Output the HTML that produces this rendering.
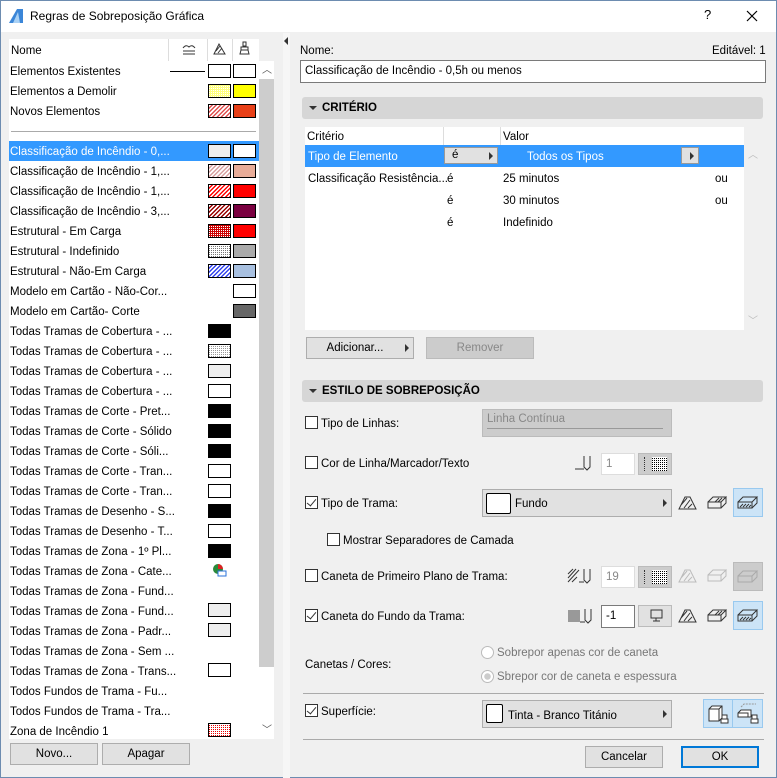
<!DOCTYPE html>
<html><head><meta charset="utf-8"><style>
*{box-sizing:border-box;margin:0;padding:0}
body{width:777px;height:778px;background:#f0f0f0;font-family:"Liberation Sans",sans-serif;font-size:11.5px;color:#000;position:relative;overflow:hidden}
.a{position:absolute}
.win{left:0;top:0;width:777px;height:778px;border:1px solid #6d8cb0}
.t{position:absolute;white-space:nowrap;line-height:14px}
.sw{position:absolute;width:23px;height:14px;border:1px solid #000}
.btn{position:absolute;background:#e1e1e1;border:1px solid #adadad;text-align:center;line-height:20px}
.hdr{position:absolute;background:#d6d6d6;border-radius:3px;font-weight:bold;line-height:22px;padding-left:20px}
.hdr:before{content:"";position:absolute;left:7px;top:9px;border-left:4px solid transparent;border-right:4px solid transparent;border-top:4px solid #333}
.cb{position:absolute;width:13px;height:13px;border:1px solid #333;background:#fff}
.ck:after{content:"";position:absolute;left:3px;top:0px;width:4px;height:8px;border-right:1.5px solid #333;border-bottom:1.5px solid #333;transform:rotate(40deg)}
.dd{position:absolute;background:#e1e1e1;border:1px solid #adadad}
.dd:after{content:"";position:absolute;right:4px;top:50%;margin-top:-4px;border-top:4px solid transparent;border-bottom:4px solid transparent;border-left:4px solid #333}
.inp{position:absolute;background:#fff;border:1px solid #ccc;line-height:20px;padding-left:4px}
.ib{position:absolute;width:30px;height:29px}
.sel{background:#cce4f7;border:1px solid #99c9ef}
.hatch{background:repeating-linear-gradient(135deg,#fff 0 1.5px,var(--c) 1.5px 3px)}
.dots{background-color:#fff;background-image:linear-gradient(90deg,var(--c) 50%,transparent 50%),linear-gradient(0deg,#fff 50%,transparent 50%);background-size:2px 2px;background-blend-mode:normal}
.dots2{background-image:repeating-linear-gradient(90deg,var(--c) 0 1px,transparent 1px 2px);position:absolute;inset:0}
.mask{position:absolute;inset:0;background-image:repeating-linear-gradient(0deg,transparent 0 1px,var(--b,#fff) 1px 2px)}
</style></head><body>
<div class="a win"></div>
<div class="a" style="left:1px;top:1px;width:775px;height:31px;background:#fff"></div>
<svg class="a" style="left:8px;top:8px" width="16" height="16"><path d="M1 15 L9 1 L15 1 L15 15 Z" fill="#3b86d8"/><path d="M5 15 L10 4 L12 15Z" fill="#a9d1f5"/></svg>
<div class="t" style="left:30px;top:9px;font-size:12px">Regras de Sobreposição Gráfica</div>
<div class="t" style="left:704px;top:8px;font-size:13px">?</div>
<svg class="a" style="left:746px;top:10px" width="12" height="12"><path d="M1 1L11 11M11 1L1 11" stroke="#000" stroke-width="1.2"/></svg>

<div class="a" style="left:9px;top:39px;width:250px;height:700px;background:#fff"></div>
<div class="a" style="left:259px;top:61px;width:15px;height:678px;background:#fff"></div>
<div class="a" style="left:259px;top:79px;width:15px;height:588px;background:#cdcdcd"></div>
<div class="t" style="left:262px;top:64px;font-size:10px;color:#555">︿</div>
<div class="t" style="left:262px;top:724px;font-size:10px;color:#555">﹀</div>
<div class="a" style="left:283px;top:33px;width:7px;height:745px;background:#f6f6f6"></div>
<div class="a" style="left:284px;top:37px;border-top:4px solid transparent;border-bottom:4px solid transparent;border-right:4px solid #333"></div>
<div class="a" style="left:168px;top:39px;width:1px;height:22px;background:#ddd"></div>
<div class="a" style="left:207px;top:39px;width:1px;height:22px;background:#ddd"></div>
<div class="a" style="left:232px;top:39px;width:1px;height:22px;background:#ddd"></div>
<div class="t" style="left:11px;top:44px">Nome</div>
<svg class="a" style="left:182px;top:43px" width="14" height="12"><path d="M1 5Q4 1 7 4Q10 1 13 5M1 8H13M1 11H13" stroke="#333" fill="none"/></svg>
<svg class="a" style="left:213px;top:42px" width="13" height="13"><path d="M1 12L6 2L12 12ZM3 9L7 4M5 11L9 6" stroke="#333" fill="none"/></svg>
<svg class="a" style="left:239px;top:41px" width="11" height="14"><path d="M4 1H7V5H4ZM2 6H9V9H2ZM2 9L1 13H10L9 9" stroke="#333" fill="none"/></svg>

<div class="t" style="left:10px;top:65px">Elementos Existentes</div>
<div class="a" style="left:170px;top:71px;width:35px;height:1px;background:#000"></div>
<div class="sw" style="left:208px;top:64px"></div><div class="sw" style="left:233px;top:64px"></div>
<div class="t" style="left:10px;top:85px">Elementos a Demolir</div>
<div class="sw" style="left:208px;top:84px;background:#ffff80"><div class="dots2" style="--c:#fff"></div><div class="mask" style="--b:#ffff80"></div></div><div class="sw" style="left:233px;top:84px;background:#ff0"></div>
<div class="t" style="left:10px;top:105px">Novos Elementos</div>
<div class="sw hatch" style="left:208px;top:104px;--c:#e05050"></div><div class="sw" style="left:233px;top:104px;background:#e84018"></div>
<div class="a" style="left:11px;top:131px;width:245px;height:1px;background:#aaa"></div>

<div class="a" style="left:9px;top:141px;width:250px;height:20px;background:#3399ff"></div>
<div class="t" style="left:10px;top:145px;color:#fff">Classificação de Incêndio - 0,...</div>
<div class="sw" style="left:208px;top:144px;background:#eee"></div><div class="sw" style="left:233px;top:144px;background:#fff"></div>

<div class="t" style="left:10px;top:165px">Classificação de Incêndio - 1,...</div>
<div class="sw hatch" style="left:208px;top:164px;--c:#d8a0a0"></div><div class="sw" style="left:233px;top:164px;background:#e8ac98"></div>
<div class="t" style="left:10px;top:185px">Classificação de Incêndio - 1,...</div>
<div class="sw hatch" style="left:208px;top:184px;--c:#f00"></div><div class="sw" style="left:233px;top:184px;background:#f00"></div>
<div class="t" style="left:10px;top:205px">Classificação de Incêndio - 3,...</div>
<div class="sw hatch" style="left:208px;top:204px;--c:#900"></div><div class="sw" style="left:233px;top:204px;background:#7a0040"></div>
<div class="t" style="left:10px;top:225px">Estrutural - Em Carga</div>
<div class="sw" style="left:208px;top:224px;background:#c00"><div class="dots2" style="--c:#fff"></div><div class="mask" style="--b:#c00"></div></div><div class="sw" style="left:233px;top:224px;background:#f00"></div>
<div class="t" style="left:10px;top:245px">Estrutural - Indefinido</div>
<div class="sw" style="left:208px;top:244px;background:#fff"><div class="dots2" style="--c:#777"></div><div class="mask"></div></div><div class="sw" style="left:233px;top:244px;background:#aaa"></div>
<div class="t" style="left:10px;top:265px">Estrutural - Não-Em Carga</div>
<div class="sw hatch" style="left:208px;top:264px;--c:#3344ee"></div><div class="sw" style="left:233px;top:264px;background:#a8c0e0"></div>
<div class="t" style="left:10px;top:285px">Modelo em Cartão - Não-Cor...</div>
<div class="sw" style="left:233px;top:284px;background:#fff"></div>
<div class="t" style="left:10px;top:305px">Modelo em Cartão- Corte</div>
<div class="sw" style="left:233px;top:304px;background:#666"></div>

<div class="t" style="left:10px;top:325px">Todas Tramas de Cobertura - ...</div><div class="sw" style="left:208px;top:324px;background:#000"></div>
<div class="t" style="left:10px;top:345px">Todas Tramas de Cobertura - ...</div><div class="sw" style="left:208px;top:344px;background:#fff"><div class="dots2" style="--c:#999"></div><div class="mask"></div></div>
<div class="t" style="left:10px;top:365px">Todas Tramas de Cobertura - ...</div><div class="sw" style="left:208px;top:364px;background:#eee"></div>
<div class="t" style="left:10px;top:385px">Todas Tramas de Cobertura - ...</div><div class="sw" style="left:208px;top:384px;background:#fff"></div>
<div class="t" style="left:10px;top:405px">Todas Tramas de Corte - Pret...</div><div class="sw" style="left:208px;top:404px;background:#000"></div>
<div class="t" style="left:10px;top:425px">Todas Tramas de Corte - Sólido</div><div class="sw" style="left:208px;top:424px;background:#000"></div>
<div class="t" style="left:10px;top:445px">Todas Tramas de Corte - Sóli...</div><div class="sw" style="left:208px;top:444px;background:#000"></div>
<div class="t" style="left:10px;top:465px">Todas Tramas de Corte - Tran...</div><div class="sw" style="left:208px;top:464px;background:#fff"></div>
<div class="t" style="left:10px;top:485px">Todas Tramas de Corte - Tran...</div><div class="sw" style="left:208px;top:484px;background:#fff"></div>
<div class="t" style="left:10px;top:505px">Todas Tramas de Desenho - S...</div><div class="sw" style="left:208px;top:504px;background:#000"></div>
<div class="t" style="left:10px;top:525px">Todas Tramas de Desenho - T...</div><div class="sw" style="left:208px;top:524px;background:#fff"></div>
<div class="t" style="left:10px;top:545px">Todas Tramas de Zona - 1º Pl...</div><div class="sw" style="left:208px;top:544px;background:#000"></div>
<div class="t" style="left:10px;top:565px">Todas Tramas de Zona - Cate...</div>
<svg class="a" style="left:212px;top:563px" width="16" height="14"><circle cx="6" cy="6" r="5" fill="#2a8a3a"/><path d="M6 6V1A5 5 0 0 1 11 6Z" fill="#d22"/><path d="M6 8H14V13H6Z" fill="#fff" stroke="#2a72d8"/></svg>
<div class="t" style="left:10px;top:585px">Todas Tramas de Zona - Fund...</div>
<div class="t" style="left:10px;top:605px">Todas Tramas de Zona - Fund...</div><div class="sw" style="left:208px;top:603px;background:#eee"></div>
<div class="t" style="left:10px;top:625px">Todas Tramas de Zona - Padr...</div><div class="sw" style="left:208px;top:623px;background:#eee"></div>
<div class="t" style="left:10px;top:645px">Todas Tramas de Zona - Sem ...</div>
<div class="t" style="left:10px;top:665px">Todas Tramas de Zona - Trans...</div><div class="sw" style="left:208px;top:663px;background:#fff"></div>
<div class="t" style="left:10px;top:685px">Todos Fundos de Trama - Fu...</div>
<div class="t" style="left:10px;top:705px">Todos Fundos de Trama - Tra...</div>
<div class="t" style="left:10px;top:725px">Zona de Incêndio 1</div><div class="sw" style="left:208px;top:723px;background:#fff"><div class="dots2" style="--c:#e00"></div><div class="mask"></div></div>

<div class="btn" style="left:10px;top:743px;width:88px;height:22px">Novo...</div>
<div class="btn" style="left:102px;top:743px;width:88px;height:22px">Apagar</div>

<div class="t" style="left:300px;top:44px">Nome:</div>
<div class="t" style="left:712px;top:44px">Editável: 1</div>
<div class="inp" style="left:300px;top:60px;width:466px;height:23px;border-color:#7a7a7a;line-height:21px">Classificação de Incêndio - 0,5h ou menos</div>
<div class="hdr" style="left:302px;top:97px;width:461px;height:22px">CRITÉRIO</div>
<div class="a" style="left:305px;top:127px;width:439px;height:203px;background:#fff"></div>
<div class="a" style="left:443px;top:127px;width:1px;height:18px;background:#ddd"></div>
<div class="a" style="left:500px;top:127px;width:1px;height:18px;background:#ddd"></div>
<div class="t" style="left:307px;top:130px">Critério</div>
<div class="t" style="left:503px;top:130px">Valor</div>
<div class="a" style="left:305px;top:145px;width:439px;height:22px;background:#3399ff"></div>
<div class="t" style="left:308px;top:150px;color:#fff">Tipo de Elemento</div>
<div class="dd" style="left:444px;top:147px;width:54px;height:17px;border-color:#999;padding-left:7px;line-height:15px">é</div>
<div class="t" style="left:527px;top:150px;color:#fff">Todos os Tipos</div>
<div class="dd" style="left:681px;top:147px;width:18px;height:17px;border-color:#999"></div>
<div class="t" style="left:308px;top:172px">Classificação Resistência...</div>
<div class="t" style="left:447px;top:172px">é</div><div class="t" style="left:503px;top:172px">25 minutos</div><div class="t" style="left:715px;top:172px">ou</div>
<div class="t" style="left:447px;top:194px">é</div><div class="t" style="left:503px;top:194px">30 minutos</div><div class="t" style="left:715px;top:194px">ou</div>
<div class="t" style="left:447px;top:216px">é</div><div class="t" style="left:503px;top:216px">Indefinido</div>
<div class="t" style="left:748px;top:149px;font-size:10px;color:#bbb">︿</div>
<div class="t" style="left:748px;top:315px;font-size:10px;color:#bbb">﹀</div>
<div class="dd" style="left:306px;top:337px;width:108px;height:22px;text-align:center;line-height:20px;padding-right:10px">Adicionar...</div>
<div class="btn" style="left:426px;top:337px;width:108px;height:22px;background:#ccc;border-color:#bbb;color:#888">Remover</div>

<div class="hdr" style="left:302px;top:380px;width:461px;height:22px">ESTILO DE SOBREPOSIÇÃO</div>
<div class="cb" style="left:305px;top:416px"></div><div class="t" style="left:321px;top:417px">Tipo de Linhas:</div>
<div class="a" style="left:482px;top:409px;width:190px;height:28px;background:#ccc;border:1px solid #bbb"></div>
<div class="t" style="left:487px;top:412px;color:#888">Linha Contínua</div>
<div class="a" style="left:487px;top:428px;width:176px;height:1px;background:#999"></div>
<div class="cb" style="left:305px;top:456px"></div><div class="t" style="left:321px;top:457px">Cor de Linha/Marcador/Texto</div>
<svg class="a" style="left:575px;top:453px" width="22" height="18"><path d="M0 16H9M9 3V14L12 17L15 14V3" stroke="#333" fill="none"/></svg>
<div class="inp" style="left:601px;top:453px;width:34px;height:22px;color:#888;border-color:#ddd">1</div>
<div class="a" style="left:638px;top:453px;width:34px;height:22px;background:#ccc;border:1px solid #bbb"></div>
<div class="a" style="left:652px;top:457px;width:15px;height:14px;background:#fff"><div class="dots2" style="--c:#000"></div><div class="mask"></div></div>
<div class="a" style="left:644px;top:457px;width:1px;height:14px;border-left:1px dotted #333"></div>

<div class="cb ck" style="left:305px;top:496px"></div><div class="t" style="left:321px;top:497px">Tipo de Trama:</div>
<div class="dd" style="left:482px;top:489px;width:190px;height:28px"></div>
<div class="a" style="left:486px;top:493px;width:25px;height:21px;background:#fff;border:1px solid #000;border-radius:2px"></div>
<div class="t" style="left:515px;top:497px">Fundo</div>
<svg class="a" style="left:678px;top:495px" width="20" height="16"><path d="M1 14L7 2H12L18 14ZM3 10L9 3M6 13L12 5M10 13L14 9" stroke="#333" fill="none"/></svg>
<svg class="a" style="left:707px;top:495px" width="20" height="16"><path d="M1 7H14V13H1ZM1 7L6 2H19L14 7M19 2V8L14 13M8 7L12 3M11 7L15 3" stroke="#333" fill="none"/></svg>
<div class="ib sel" style="left:733px;top:488px"></div>
<svg class="a" style="left:737px;top:495px" width="22" height="16"><path d="M1 7H15V13H1ZM1 7L6 2H20L15 7M20 2V8L15 13M3 12L6 9M6 12L9 9M9 12L12 9M12 12L14 10" stroke="#333" fill="none"/></svg>

<div class="cb" style="left:327px;top:533px"></div><div class="t" style="left:343px;top:534px">Mostrar Separadores de Camada</div>

<div class="cb" style="left:305px;top:569px"></div><div class="t" style="left:321px;top:570px">Caneta de Primeiro Plano de Trama:</div>
<svg class="a" style="left:567px;top:566px" width="30" height="18"><path d="M1 8L6 3M1 12L9 3M1 16L12 4M5 16L10 11M12 16H17M17 3V14L20 17L23 14V3" stroke="#333" fill="none"/></svg>
<div class="inp" style="left:601px;top:566px;width:34px;height:22px;color:#888;border-color:#ddd">19</div>
<div class="a" style="left:638px;top:566px;width:34px;height:22px;background:#ccc;border:1px solid #bbb"></div>
<div class="a" style="left:652px;top:570px;width:15px;height:14px;background:#fff"><div class="dots2" style="--c:#000"></div><div class="mask"></div></div>
<div class="a" style="left:644px;top:570px;width:1px;height:14px;border-left:1px dotted #333"></div>
<svg class="a" style="left:678px;top:568px" width="20" height="16"><path d="M1 14L7 2H12L18 14ZM3 10L9 3M6 13L12 5M10 13L14 9" stroke="#bbb" fill="none"/></svg>
<svg class="a" style="left:707px;top:568px" width="20" height="16"><path d="M1 7H14V13H1ZM1 7L6 2H19L14 7M19 2V8L14 13" stroke="#bbb" fill="none"/></svg>
<div class="ib" style="left:733px;top:562px;background:#ccc;border:1px solid #bbb"></div>
<svg class="a" style="left:737px;top:569px" width="22" height="16"><path d="M1 7H15V13H1ZM1 7L6 2H20L15 7M20 2V8L15 13" stroke="#aaa" fill="none"/></svg>

<div class="cb ck" style="left:305px;top:609px"></div><div class="t" style="left:321px;top:610px">Caneta do Fundo da Trama:</div>
<div class="a" style="left:568px;top:610px;width:12px;height:12px;background:#999"></div>
<svg class="a" style="left:580px;top:606px" width="18" height="18"><path d="M0 16H5M5 3V14L8 17L11 14V3" stroke="#333" fill="none"/></svg>
<div class="inp" style="left:601px;top:605px;width:34px;height:23px;border-color:#7a7a7a">-1</div>
<div class="a" style="left:638px;top:605px;width:34px;height:22px;background:#e1e1e1;border:1px solid #bbb"></div>
<svg class="a" style="left:650px;top:609px" width="14" height="14"><path d="M1 1H12V9H1ZM6 9V12M3 12H10" stroke="#333" fill="none"/></svg>
<svg class="a" style="left:678px;top:608px" width="20" height="16"><path d="M1 14L7 2H12L18 14ZM3 10L9 3M6 13L12 5M10 13L14 9" stroke="#333" fill="none"/></svg>
<svg class="a" style="left:707px;top:608px" width="20" height="16"><path d="M1 7H14V13H1ZM1 7L6 2H19L14 7M19 2V8L14 13M8 7L12 3M11 7L15 3" stroke="#333" fill="none"/></svg>
<div class="ib sel" style="left:733px;top:601px"></div>
<svg class="a" style="left:737px;top:608px" width="22" height="16"><path d="M1 7H15V13H1ZM1 7L6 2H20L15 7M20 2V8L15 13M3 12L6 9M6 12L9 9M9 12L12 9M12 12L14 10" stroke="#333" fill="none"/></svg>

<div class="t" style="left:305px;top:658px">Canetas / Cores:</div>
<div class="a" style="left:481px;top:646px;width:13px;height:13px;border-radius:50%;border:1px solid #bbb;background:#fff"></div>
<div class="t" style="left:497px;top:646px;color:#777">Sobrepor apenas cor de caneta</div>
<div class="a" style="left:481px;top:670px;width:13px;height:13px;border-radius:50%;border:1px solid #bbb;background:radial-gradient(#ccc 3px,#fff 3.5px)"></div>
<div class="t" style="left:497px;top:670px;color:#777">Sbrepor cor de caneta e espessura</div>
<div class="a" style="left:303px;top:693px;width:461px;height:1px;background:#aaa"></div>
<div class="cb ck" style="left:305px;top:704px"></div><div class="t" style="left:321px;top:705px">Superfície:</div>
<div class="dd" style="left:482px;top:700px;width:190px;height:28px"></div>
<div class="a" style="left:486px;top:704px;width:17px;height:19px;background:#fff;border:1px solid #000;border-radius:2px"></div>
<div class="t" style="left:508px;top:709px">Tinta - Branco Titánio</div>
<div class="a sel" style="left:703px;top:699px;width:60px;height:29px"></div>
<div class="a" style="left:732px;top:700px;width:1px;height:27px;background:#99c9ef"></div>
<svg class="a" style="left:707px;top:703px" width="22" height="22"><path d="M2 6L5 3H15V15L12 18H2ZM2 6H12V18M12 6L15 3" stroke="#333" fill="#fff"/><path d="M15 12H20V16H15ZM14 16H21V20H14Z" stroke="#333" fill="#fff"/></svg>
<svg class="a" style="left:736px;top:703px" width="24" height="22"><path d="M5 4L8 1H20" stroke="#999" stroke-dasharray="2 1" fill="none"/><path d="M2 10L5 7H15V14H2ZM2 10H12V14" stroke="#333" fill="#fff"/><path d="M16 12H21V16H16ZM15 16H22V20H15Z" stroke="#333" fill="#fff"/></svg>
<div class="a" style="left:303px;top:739px;width:461px;height:1px;background:#aaa"></div>
<div class="btn" style="left:585px;top:746px;width:78px;height:22px">Cancelar</div>
<div class="btn" style="left:681px;top:746px;width:78px;height:22px;border:2px solid #0078d7;line-height:18px">OK</div>
</body></html>
